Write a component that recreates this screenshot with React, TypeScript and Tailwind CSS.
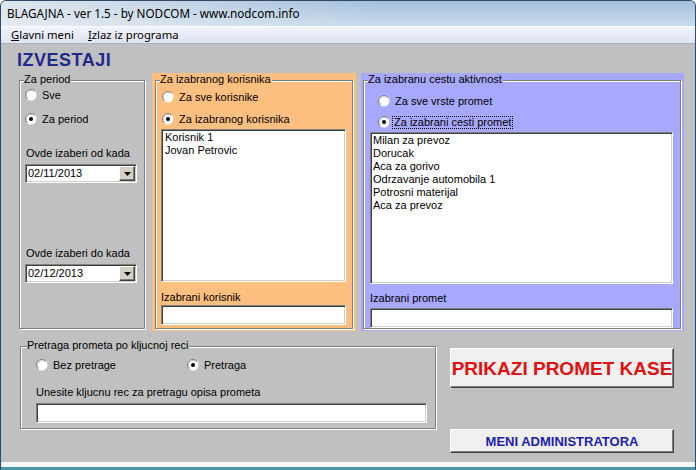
import React from "react";

const ui = "font-['Liberation_Sans',Arial,sans-serif] text-[11px] leading-[13px] text-black";
const sunken =
  "bg-white border border-t-[#808080] border-l-[#808080] border-b-white border-r-white shadow-[inset_1px_1px_0_#404040,inset_-1px_-1px_0_#d4d0c8]";
const raised =
  "border border-t-white border-l-white border-b-[#404040] border-r-[#404040] shadow-[inset_-1px_-1px_0_#808080]";

function Radio({ checked }: { checked?: boolean }) {
  return (
    <svg width="12" height="12" viewBox="0 0 12 12" className="shrink-0">
      <circle cx="6" cy="6" r="5.5" fill="#fff" />
      <path d="M2.1 9.9A5.5 5.5 0 0 1 9.9 2.1" stroke="#808080" fill="none" />
      <path d="M2.8 9.2A4.5 4.5 0 0 1 9.2 2.8" stroke="#c8c8c8" fill="none" />
      {checked && <circle cx="6" cy="6" r="2" fill="#000" />}
    </svg>
  );
}

function RadioRow({
  label,
  checked,
  className = "",
}: {
  label: string;
  checked?: boolean;
  className?: string;
}) {
  return (
    <div className={`flex items-center gap-[5px] h-[16px] ${className}`}>
      <Radio checked={checked} />
      <span>{label}</span>
    </div>
  );
}

function GroupBox({
  title,
  legendBg,
  className = "",
  legendLeft = "left-[4px]",
  children,
}: {
  title: string;
  legendBg: string;
  className?: string;
  legendLeft?: string;
  children?: React.ReactNode;
}) {
  return (
    <div
      className={`relative border border-[#808080] shadow-[1px_1px_0_#fff,inset_1px_1px_0_#fff] ${className}`}
    >
      <span className={`absolute -top-[8px] ${legendLeft} ${legendBg} pr-[1px] leading-[13px]`}>
        {title}
      </span>
      {children}
    </div>
  );
}

function DateBox({ value }: { value: string }) {
  return (
    <div className={`h-[19px] w-[112px] flex items-center ${sunken}`}>
      <span className="flex-1 pl-[2px]">{value}</span>
      <div
        className={`w-[16px] h-[15px] mr-[1px] bg-[#d4d0c8] flex items-center justify-center ${raised}`}
      >
        <svg width="7" height="4" viewBox="0 0 7 4">
          <path d="M0 0h7L3.5 4z" fill="#000" />
        </svg>
      </div>
    </div>
  );
}

export default function App() {
  const users = ["Korisnik 1", "Jovan Petrovic"];
  const promet = [
    "Milan za prevoz",
    "Dorucak",
    "Aca za gorivo",
    "Odrzavanje automobila 1",
    "Potrosni materijal",
    "Aca za prevoz",
  ];

  return (
    <div className="w-[696px] h-[470px] flex flex-col overflow-hidden border-x border-t border-[#2f4a66] rounded-t-[6px] bg-[#c0c0c0]">
      {/* title bar */}
      <div className="h-[25px] flex items-center pl-[6px] bg-[linear-gradient(to_right,rgba(232,236,240,0.85),rgba(232,236,240,0)_55%),linear-gradient(to_bottom,#a3bfdc,#c9dcee)] font-['Noto_Sans',sans-serif] text-[11.7px] text-black">
        BLAGAJNA - ver 1.5 - by NODCOM - www.nodcom.info
      </div>
      {/* menu */}
      <div className="h-[18px] flex items-center gap-[14px] pl-[10px] border-t border-white border-b border-b-[#a8b2c4] bg-[linear-gradient(to_bottom,#f2f4fa,#dfe4f2)] font-['Noto_Sans',sans-serif] text-[11.3px] text-black">
        <span>
          <span className="underline">G</span>lavni meni
        </span>
        <span>
          <span className="underline">I</span>zlaz iz programa
        </span>
      </div>

      {/* client */}
      <div className={`h-[418px] flex flex-col border-l border-r border-[#a9c0d6] ${ui}`}>
        <div className="h-[29px] pl-[15px] pt-[6px]">
          <span className="font-['Liberation_Sans',Arial,sans-serif] font-bold text-[18px] leading-[21px] tracking-[0.5px] text-[#1e2a8c]">
            IZVESTAJI
          </span>
        </div>

        <div className="h-[258px] flex pl-[14px]">
          {/* period */}
          <div className="w-[132px] pt-[7px] px-[3px] pb-[2px] flex">
            <GroupBox title="Za period" legendBg="bg-[#c0c0c0]" className="flex-1">
              <div className="flex flex-col pl-[5px] pt-[6px]">
                <RadioRow label="Sve" />
                <RadioRow label="Za period" checked className="mt-[8px]" />
                <div className="mt-[20px] pl-[1px]">Ovde izaberi od kada</div>
                <div className="mt-[4px]">
                  <DateBox value="02/11/2013" />
                </div>
                <div className="mt-[64px] pl-[1px]">Ovde izaberi do kada</div>
                <div className="mt-[4px]">
                  <DateBox value="02/12/2013" />
                </div>
              </div>
            </GroupBox>
          </div>

          {/* korisnik */}
          <div className="w-[204px] ml-[4px] bg-[#ffbf80] pt-[7px] px-[3px] pb-[2px] flex">
            <GroupBox title="Za izabranog korisnika" legendBg="bg-[#ffbf80]" className="flex-1">
              <div className="flex flex-col pl-[5px] pt-[8px]">
                <RadioRow label="Za sve korisnike" className="pl-[1px] gap-[4px]" />
                <RadioRow label="Za izabranog korisnika" checked className="mt-[6px] pl-[1px] gap-[4px]" />
                <div className={`mt-[2px] w-[185px] h-[153px] pl-[3px] pt-[1px] ${sunken}`}>
                  {users.map((u) => (
                    <div key={u}>{u}</div>
                  ))}
                </div>
                <div className="mt-[9px]">Izabrani korisnik</div>
                <div className={`mt-[1px] w-[185px] h-[20px] ${sunken}`} />
              </div>
            </GroupBox>
          </div>

          {/* promet */}
          <div className="w-[323px] ml-[5px] bg-[#a8a8ff] pt-[7px] pl-[2px] pr-[3px] pb-[2px] flex">
            <GroupBox title="Za izabranu cestu aktivnost" legendBg="bg-[#a8a8ff]" className="flex-1">
              <div className="flex flex-col pl-[6px] pt-[12px]">
                <RadioRow label="Za sve vrste promet" className="pl-[8px] gap-[4px]" />
                <div className="mt-[5px] pl-[8px] h-[16px] flex items-center gap-[2px]">
                  <Radio checked />
                  <span className="border border-dotted border-black px-[1px] leading-[11px]">
                    Za izabrani cesti promet
                  </span>
                </div>
                <div className={`mt-[2px] w-[303px] h-[152px] pl-[2px] pt-[1px] ${sunken}`}>
                  {promet.map((p, i) => (
                    <div key={i}>{p}</div>
                  ))}
                </div>
                <div className="mt-[8px]">Izabrani promet</div>
                <div className={`mt-[3px] w-[303px] h-[20px] ${sunken}`} />
              </div>
            </GroupBox>
          </div>
        </div>

        {/* bottom */}
        <div className="mt-[15px] flex items-start">
          <GroupBox
            title="Pretraga prometa po kljucnoj reci"
            legendBg="bg-[#c0c0c0]"
            legendLeft="left-[6px]"
            className="ml-[18px] w-[416px] h-[83px]"
          >
            <div className="flex flex-col pl-[15px] pt-[10px]">
              <div className="flex">
                <RadioRow label="Bez pretrage" className="w-[151px]" />
                <RadioRow label="Pretraga" checked />
              </div>
              <div className="mt-[13px]">Unesite kljucnu rec za pretragu opisa prometa</div>
              <div className={`mt-[4px] w-[391px] h-[20px] ${sunken}`} />
            </div>
          </GroupBox>

          <div className="ml-[14px] w-[224px] pt-[2px] flex flex-col">
            <div
              className={`h-[40px] bg-[#f0f0f0] flex items-center justify-center font-bold text-[19px] text-[#e41010] ${raised}`}
            >
              PRIKAZI PROMET KASE
            </div>
            <div
              className={`mt-[41px] h-[24px] bg-[#f0f0f0] flex items-center justify-center font-bold text-[13px] text-[#1c1cb0] ${raised}`}
            >
              MENI ADMINISTRATORA
            </div>
          </div>
        </div>
      </div>

      {/* bottom frame */}
      <div className="h-[5px] bg-[#f4f7fa]" />
      <div className="h-[3px] bg-[#4f95a8]" />
    </div>
  );
}
